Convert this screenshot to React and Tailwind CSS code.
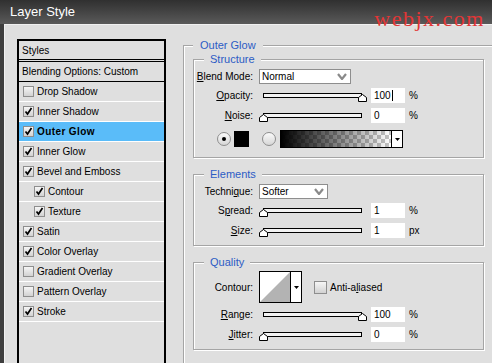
import React from "react";

const layers = [
  { name: "Drop Shadow", on: false },
  { name: "Inner Shadow", on: true },
  { name: "Outer Glow", on: true, active: true },
  { name: "Inner Glow", on: true },
  { name: "Bevel and Emboss", on: true },
  { name: "Contour", on: true, sub: true },
  { name: "Texture", on: true, sub: true },
  { name: "Satin", on: true },
  { name: "Color Overlay", on: true },
  { name: "Gradient Overlay", on: false },
  { name: "Pattern Overlay", on: false },
  { name: "Stroke", on: true },
];

function Check({ on, size = "h-[11px] w-[11px]" }) {
  return (
    <span className={`flex shrink-0 items-center justify-center border border-[#8e8e8e] bg-gradient-to-b from-[#f6f6f6] to-[#d2d2d2] ${size}`}>
      {on && (
        <svg width="9" height="9" viewBox="0 0 9 9">
          <path d="M1.5 4.5 L3.5 7 L7.5 1" fill="none" stroke="#000" strokeWidth="1.7" />
        </svg>
      )}
    </span>
  );
}

function Radio({ on }) {
  return (
    <span className="flex h-[14px] w-[14px] shrink-0 items-center justify-center rounded-full border border-[#8e8e8e] bg-gradient-to-b from-[#fbfbfb] to-[#d6d6d6]">
      {on && <span className="h-[4px] w-[4px] rounded-full bg-black" />}
    </span>
  );
}

function Arrow() {
  return (
    <svg width="5" height="3" viewBox="0 0 5 3">
      <path d="M0 0 H5 L2.5 3 Z" fill="#000" />
    </svg>
  );
}

function Select({ value, w }) {
  return (
    <div className={`flex h-[15px] items-center justify-between border border-[#8e8e8e] bg-white pl-[2px] pr-[3px] ${w}`}>
      <span>{value}</span>
      <svg width="10" height="7" viewBox="0 0 10 7">
        <path d="M1 1 L5 6 L9 1" fill="none" stroke="#8a8a8a" strokeWidth="2.2" />
      </svg>
    </div>
  );
}

function Slider({ end }) {
  return (
    <div className="relative flex h-[15px] w-[108px] items-center">
      <div className="ml-[4px] h-[5px] w-[99px] border border-black bg-[#f2f2f2]" />
      <svg
        className={end ? "absolute left-[99px] top-[6px]" : "absolute left-0 top-[6px]"}
        width="9"
        height="8"
        viewBox="0 0 9 8"
      >
        <path d="M4.5 0.5 L8.5 3.5 V7.5 H0.5 V3.5 Z" fill="#fff" stroke="#000" />
      </svg>
    </div>
  );
}

function Field({ value, unit, caret }) {
  return (
    <>
      <div className="ml-[4px] flex h-[15px] w-[34px] items-center bg-white pl-[3px]">
        {value}
        {caret && <span className="ml-[1px] h-[11px] w-px bg-black" />}
      </div>
      <span className="ml-[4px]">{unit}</span>
    </>
  );
}

function Row({ label, h = "h-[15px]", children }) {
  return (
    <div className={`flex items-center ${h}`}>
      <span className="w-[60px] pr-[1px] text-right">{label}</span>
      <div className="ml-[5px] flex items-center">{children}</div>
    </div>
  );
}

function Group({ title, className, children }) {
  return (
    <div className={`relative w-[291px] border border-[#a5a5a5] shadow-[inset_1px_1px_0_#fff,1px_1px_0_#fff] ${className}`}>
      <span className="absolute -top-[8px] left-[10px] bg-[#dfdfdf] px-[6px] text-[11px] leading-[14px] text-[#2c5cc5]">
        {title}
      </span>
      {children}
    </div>
  );
}

export default function App() {
  return (
    <div className="relative h-[363px] w-[492px] overflow-hidden bg-[#3e3e3e] font-['Liberation_Sans',Arial,sans-serif] text-[10px] text-black">
      <div className="flex h-[24px] items-center bg-gradient-to-b from-[#303030] to-[#5a5a5a] px-[10px] text-[13px] text-white">
        Layer Style
      </div>
      <span className="absolute right-[7px] top-[8px] font-['Liberation_Serif',serif] text-[22px] leading-[22px] tracking-[1.5px] text-[#e23636]">
        webjx.com
      </span>

      <div className="flex h-[339px]">
        <div className="w-[4px] shrink-0 bg-[#3e3e3e]" />
        <div className="flex flex-1 items-start border-l border-t border-[#f0f0f0] bg-[#dfdfdf]">
          {/* styles list */}
          <div className="ml-[12px] mt-[14px] h-[340px] w-[149px] shrink-0 border-2 border-black">
            <div className="flex h-[19px] items-center border-b border-black pl-[3px]">Styles</div>
            <div className="mt-[1px] flex h-[21px] items-center border-y border-black pl-[3px]">
              Blending Options: Custom
            </div>
            {layers.map((l) => (
              <div
                key={l.name}
                className={`flex h-[20px] items-center border-b border-white ${l.sub ? "pl-[15px]" : "pl-[4px]"} ${
                  l.active ? "bg-[#5abcf9] font-bold tracking-[0.4px]" : ""
                }`}
              >
                <Check on={l.on} />
                <span className="ml-[3px]">{l.name}</span>
              </div>
            ))}
          </div>

          {/* outer glow panel */}
          <div className="relative ml-[17px] mt-[20px] h-[340px] w-[320px] shrink-0 border-l border-t border-[#a5a5a5] shadow-[inset_1px_1px_0_#fff]">
            <span className="absolute -top-[8px] left-[9px] bg-[#dfdfdf] px-[7px] text-[11px] leading-[14px] text-[#2c5cc5]">
              Outer Glow
            </span>

            <Group title="Structure" className="ml-[9px] mt-[13px] pb-[9px] pt-[8px]">
              <Row label={<><u>B</u>lend Mode:</>} h="h-[16px]">
                <Select value="Normal" w="w-[92px]" />
              </Row>
              <div className="mt-[4px]">
                <Row label={<><u>O</u>pacity:</>}>
                  <Slider end />
                  <Field value="100" unit="%" caret />
                </Row>
              </div>
              <div className="mt-[5px]">
                <Row label={<><u>N</u>oise:</>}>
                  <Slider />
                  <Field value="0" unit="%" />
                </Row>
              </div>
              <div className="mt-[7px] flex h-[18px] items-center pl-[23px]">
                <Radio on />
                <span className="ml-[3px] h-[16px] w-[15px] bg-black" />
                <span className="ml-[13px]">
                  <Radio />
                </span>
                <div className="ml-[4px] flex h-[18px] w-[123px] border border-black">
                  <div className="h-full flex-1 bg-[image:repeating-conic-gradient(#c4c4c4_0_25%,#ffffff_0_50%)] bg-[length:8px_8px]">
                    <div className="h-full w-full bg-gradient-to-r from-black to-transparent" />
                  </div>
                  <div className="flex w-[11px] items-center justify-center border-l border-black bg-white">
                    <Arrow />
                  </div>
                </div>
              </div>
            </Group>

            <Group title="Elements" className="ml-[9px] mt-[16px] pb-[7px] pt-[9px]">
              <Row label={<>Techni<u>q</u>ue:</>}>
                <Select value="Softer" w="w-[69px]" />
              </Row>
              <div className="mt-[4px]">
                <Row label={<>S<u>p</u>read:</>}>
                  <Slider />
                  <Field value="1" unit="%" />
                </Row>
              </div>
              <div className="mt-[5px]">
                <Row label={<><u>S</u>ize:</>}>
                  <Slider />
                  <Field value="1" unit="px" />
                </Row>
              </div>
            </Group>

            <Group title="Quality" className="ml-[9px] mt-[16px] pb-[7px] pt-[8px]">
              <Row label="Contour:" h="h-[32px]">
                <div className="flex h-[32px] w-[43px] border border-black bg-white">
                  <svg width="30" height="30" viewBox="0 0 30 30">
                    <path d="M0 30 L30 0 V30 Z" fill="#b3b3b3" />
                  </svg>
                  <div className="flex flex-1 items-center justify-center border-l border-black">
                    <Arrow />
                  </div>
                </div>
                <span className="ml-[12px]">
                  <Check size="h-[13px] w-[13px]" />
                </span>
                <span className="ml-[3px]">
                  Anti-a<u>l</u>iased
                </span>
              </Row>
              <div className="mt-[4px]">
                <Row label={<><u>R</u>ange:</>}>
                  <Slider end />
                  <Field value="100" unit="%" />
                </Row>
              </div>
              <div className="mt-[5px]">
                <Row label={<><u>J</u>itter:</>}>
                  <Slider />
                  <Field value="0" unit="%" />
                </Row>
              </div>
            </Group>
          </div>
        </div>
      </div>
    </div>
  );
}
